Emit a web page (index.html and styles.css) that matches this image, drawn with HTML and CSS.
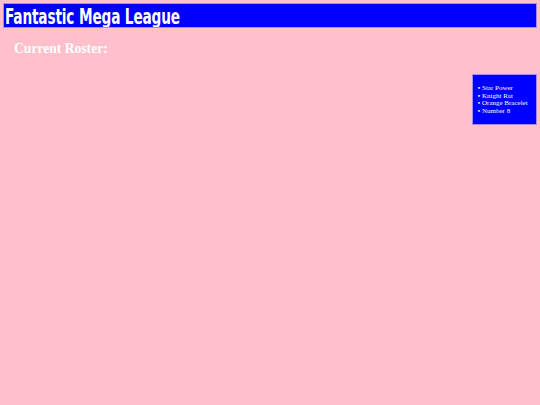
FILE: index.html
```html
<!DOCTYPE html>
<html>
<head>
<meta charset="utf-8">
<link rel="stylesheet" href="styles.css">
</head>
<body>
<header class="banner"><span class="banner-text">Fantastic Mega League</span></header>
<div class="main">
  <h2 class="roster-title">Current Roster:</h2>
  <aside class="roster-box">
    <ul class="roster-list">
      <li>Star Power</li>
      <li>Knight Rat</li>
      <li>Orange Bracelet</li>
      <li>Number 8</li>
    </ul>
  </aside>
</div>
</body>
</html>
```
FILE: styles.css
```css
html, body { margin: 0; padding: 0; }
body {
  background: #ffc0cb;
  padding: 3px;
  font-family: "Liberation Serif", serif;
  color: #fff;
}
.banner {
  background: #0000ff;
  border: 1px solid #a08cf0;
  height: 23px;
  overflow: hidden;
  color: #fff;
}
.banner-text {
  display: inline-block;
  font-family: "DejaVu Sans Condensed", "DejaVu Sans", sans-serif;
  font-weight: bold;
  font-size: 22px;
  line-height: 25px;
  margin-left: 1px;
  transform: scaleX(0.69);
  transform-origin: left center;
  letter-spacing: -0.2px;
}
.main {
  display: flex;
  flex-direction: column;
}
.roster-title {
  margin: 13px 0 0 11px;
  font-size: 13.6px;
  line-height: 16px;
  font-weight: bold;
}
.roster-box {
  align-self: flex-end;
  margin-top: 17px;
  width: 65px;
  height: 51px;
  background: #0000ff;
  border: 1px solid #a08cf0;
  box-sizing: border-box;
}
.roster-list {
  list-style: none;
  margin: 10px 0 0 0;
  padding-left: 3px;
  font-size: 7px;
  line-height: 7.6px;
}
.roster-list li {
  height: 7.6px;
}
.roster-list li::before {
  content: "\2022";
  display: inline-block;
  width: 6px;
  font-size: 7px;
  font-weight: bold;
  line-height: 7.6px;
  vertical-align: top;
  text-align: center;
}
```
